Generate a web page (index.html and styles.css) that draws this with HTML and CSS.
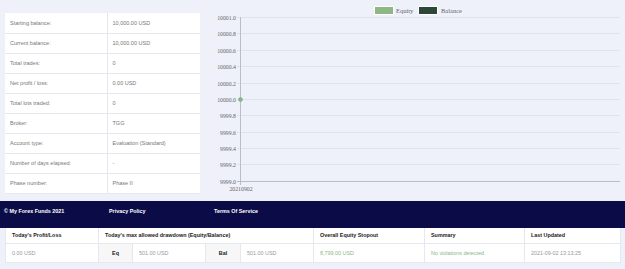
FILE: index.html
```html
<!DOCTYPE html>
<html lang="en">
<head>
    <meta charset="UTF-8">
    <meta name="viewport" content="width=device-width, initial-scale=1.0">
    <title>Account Metrics - My Forex Funds</title>
    <link rel="stylesheet" href="styles.css">
</head>
<body>
    <div class="top">
        <table class="stats">
            <tr><td>Starting balance:</td><td>10,000.00 USD</td></tr>
            <tr><td>Current balance:</td><td>10,000.00 USD</td></tr>
            <tr><td>Total trades:</td><td>0</td></tr>
            <tr><td>Net profit / loss:</td><td>0.00 USD</td></tr>
            <tr><td>Total lots traded:</td><td>0</td></tr>
            <tr><td>Broker:</td><td>TGG</td></tr>
            <tr><td>Account type:</td><td>Evaluation (Standard)</td></tr>
            <tr><td>Number of days elapsed:</td><td>-</td></tr>
            <tr><td>Phase number:</td><td>Phase II</td></tr>
        </table>

        <div class="chart">
            <svg width="425" height="201" viewBox="0 0 425 201">
                <!-- legend -->
                <rect x="174.5" y="6.5" width="19" height="8" fill="#8db885" stroke="#fff" stroke-width="1"/>
                <text x="196" y="13" class="legend">Equity</text>
                <rect x="218.5" y="6.5" width="19" height="8" fill="#2c4638" stroke="#fff" stroke-width="1"/>
                <text x="241" y="13" class="legend">Balance</text>

                <!-- grid -->
                <g class="grid">
                    <line x1="37" y1="17.5" x2="420" y2="17.5"/>
                    <line x1="37" y1="33.5" x2="420" y2="33.5"/>
                    <line x1="37" y1="50.5" x2="420" y2="50.5"/>
                    <line x1="37" y1="66.5" x2="420" y2="66.5"/>
                    <line x1="37" y1="83.5" x2="420" y2="83.5"/>
                    <line x1="37" y1="99.5" x2="420" y2="99.5"/>
                    <line x1="37" y1="115.5" x2="420" y2="115.5"/>
                    <line x1="37" y1="132.5" x2="420" y2="132.5"/>
                    <line x1="37" y1="148.5" x2="420" y2="148.5"/>
                    <line x1="37" y1="164.5" x2="420" y2="164.5"/>
                </g>
                <line class="axis" x1="37" y1="181.5" x2="420" y2="181.5"/>
                <line class="axis" x1="40.5" y1="17" x2="40.5" y2="185"/>

                <!-- y labels -->
                <g class="ticks">
                    <text x="36" y="19.5">10001.0</text>
                    <text x="36" y="35.5">10000.8</text>
                    <text x="36" y="52.5">10000.6</text>
                    <text x="36" y="68.5">10000.4</text>
                    <text x="36" y="85.5">10000.2</text>
                    <text x="36" y="101.5">10000.0</text>
                    <text x="36" y="117.5">9999.8</text>
                    <text x="36" y="134.5">9999.6</text>
                    <text x="36" y="150.5">9999.4</text>
                    <text x="36" y="166.5">9999.2</text>
                    <text x="36" y="183.5">9999.0</text>
                </g>
                <text x="41" y="191" class="xlabel">20210902</text>

                <circle cx="40.5" cy="99.5" r="2" fill="#8db885" stroke="#7a9e73" stroke-width="0.5"/>
            </svg>
        </div>
    </div>

    <footer class="footer">
        <span>© My Forex Funds 2021</span>
        <span>Privacy Policy</span>
        <span>Terms Of Service</span>
    </footer>

    <table class="summary">
        <colgroup>
            <col style="width:93px">
            <col style="width:34px">
            <col style="width:73px">
            <col style="width:35px">
            <col style="width:73px">
            <col style="width:111px">
            <col style="width:100px">
            <col style="width:96px">
        </colgroup>
        <tr class="head">
            <th>Today's Profit/Loss</th>
            <th colspan="4">Today's max allowed drawdown (Equity/Balance)</th>
            <th>Overall Equity Stopout</th>
            <th>Summary</th>
            <th>Last Updated</th>
        </tr>
        <tr>
            <td>0.00 USD</td>
            <td class="tag">Eq</td>
            <td>501.00 USD</td>
            <td class="tag">Bal</td>
            <td>501.00 USD</td>
            <td class="ok">8,799.00 USD</td>
            <td class="ok">No violations detected</td>
            <td>2021-09-02 13:13:25</td>
        </tr>
    </table>
</body>
</html>
```

FILE: styles.css
```css
:root {
    --page-bg: #eef1f9;
    --navy: #0b0c47;
    --border: #e6e8ee;
    --green: #8db885;
}

* {
    margin: 0;
    padding: 0;
    box-sizing: border-box;
}

body {
    font-family: "Liberation Sans", Arial, sans-serif;
    background: var(--page-bg);
    width: 625px;
    height: 269px;
    overflow: hidden;
}

.top {
    display: flex;
    height: 201px;
}

.stats {
    margin: 13px 0 0 5px;
    width: 195px;
    height: 180px;
    border-collapse: collapse;
    background: #fff;
    table-layout: fixed;
}

.stats td {
    height: 20px;
    border: 1px solid var(--border);
    font-size: 5.5px;
    color: #777;
    padding-left: 5px;
    vertical-align: middle;
}

.stats td:first-child {
    width: 102px;
}

.stats tr:first-child td {
    border-top: none;
}

.stats td:last-child {
    border-right: none;
}

.stats td:first-child {
    border-left: none;
}

.chart svg {
    display: block;
}

.chart text {
    font-family: "Liberation Serif", "Times New Roman", serif;
}

.legend {
    font-size: 6.5px;
    fill: #666;
}

.grid line {
    stroke: #dfe3ec;
    stroke-width: 1;
}

.axis {
    stroke: #b9bdc6;
    stroke-width: 1;
}

.ticks text {
    font-size: 5.8px;
    fill: #666;
    text-anchor: end;
}

.xlabel {
    font-size: 5.8px;
    fill: #666;
    text-anchor: middle;
}

.footer {
    display: flex;
    height: 27px;
    background: var(--navy);
    padding: 7px 0 0 4px;
    font-size: 5.4px;
    font-weight: bold;
    color: #fff;
}

.footer span {
    width: 105px;
}

.summary {
    margin: 0 5px;
    width: 615px;
    border-collapse: collapse;
    table-layout: fixed;
    background: #fff;
}

.summary th,
.summary td {
    font-size: 5.4px;
    text-align: left;
    padding-left: 6px;
    border: 1px solid var(--border);
    white-space: nowrap;
    overflow: hidden;
}

.summary th {
    height: 15px;
    font-weight: bold;
    color: #222;
    border-top: none;
}

.summary td {
    height: 19px;
    color: #999;
}

.summary td.tag {
    background: #f7f7f8;
    color: #222;
    font-weight: bold;
    text-align: center;
    padding-left: 0;
}

.summary td.ok {
    color: var(--green);
}
```
